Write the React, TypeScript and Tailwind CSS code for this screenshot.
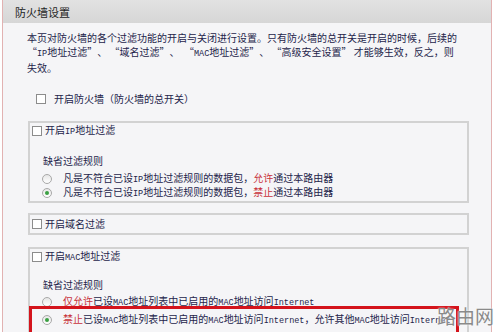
import React from 'react';

const cjk = "font-['Noto_Sans_CJK_SC',sans-serif]";

function L({ children }: { children: React.ReactNode }) {
  return <span className="font-['Liberation_Mono',monospace] text-[8.5px]">{children}</span>;
}

// full-width quote marks, like the SimSun ones in the original page
function Q({ close }: { close?: boolean }) {
  return (
    <span className={`inline-block w-[10px] ${close ? 'text-left' : 'text-right'}`}>{close ? '”' : '“'}</span>
  );
}

function Checkbox() {
  return <span className="inline-block w-[10px] h-[10px] border border-[#8c8c8c] bg-white shrink-0" />;
}

function Radio({ checked }: { checked?: boolean }) {
  return (
    <span className="w-[10px] h-[10px] rounded-full border border-[#a8a8a8] bg-gradient-to-b from-[#e6e6e6] to-white flex items-center justify-center shrink-0">
      {checked && <span className="w-[4px] h-[4px] rounded-full bg-[#3aa043]" />}
    </span>
  );
}

function CheckRow({ children }: { children: React.ReactNode }) {
  return (
    <div className="h-[16px] flex items-center pl-[2px] gap-[3px]">
      <Checkbox />
      <span>{children}</span>
    </div>
  );
}

function RadioRow({ checked, children, className = '' }: { checked?: boolean; children: React.ReactNode; className?: string }) {
  return (
    <div className={`h-[14px] flex items-center pl-[12px] gap-[11px] whitespace-nowrap ${className}`}>
      <Radio checked={checked} />
      <span>{children}</span>
    </div>
  );
}

const red = 'text-[#c8323a]';

export default function App() {
  return (
    <div className={`w-[500px] h-[332px] overflow-hidden bg-white relative ${cjk} text-[10px] leading-[14px] text-[#24244a]`}>
      <div className="ml-[2px] w-[490px] h-full border-x border-[#e2b2b2] bg-[#f5f5f7]">
        <div className="h-[23px] bg-gradient-to-b from-[#e2e2e2] to-[#d6d6d6] pl-[12px] flex items-center text-[11px] text-[#1f1f1f]">
          防火墙设置
        </div>

        <div className="pl-[24px] pt-[8px] whitespace-nowrap">
          本页对防火墙的各个过滤功能的开启与关闭进行设置。只有防火墙的总开关是开启的时候，后续的
          <br />
          <Q /><L>IP</L>地址过滤<Q close />、 <Q />域名过滤<Q close />、 &nbsp;<Q /><L>MAC</L>地址过滤<Q close />、 <Q />高级安全设置<Q close /> 才能够生效，反之，则
          <br />
          失效。
        </div>

        <div className="mt-[18px] ml-[33px] h-[12px] flex items-center gap-[8px]">
          <Checkbox />
          <span>开启防火墙（防火墙的总开关）</span>
        </div>

        <div className="ml-[25px] w-[441px] mt-[16px] border-2 border-[#d2d2d2] pb-[1px]">
          <CheckRow>
            开启<L>IP</L>地址过滤
          </CheckRow>
          <div className="mt-[15px] pl-[13px]">缺省过滤规则</div>
          <RadioRow className="mt-[4px]">
            凡是不符合已设<L>IP</L>地址过滤规则的数据包，<span className={red}>允许</span>通过本路由器
          </RadioRow>
          <RadioRow checked>
            凡是不符合已设<L>IP</L>地址过滤规则的数据包，<span className={red}>禁止</span>通过本路由器
          </RadioRow>
        </div>

        <div className="ml-[25px] w-[441px] mt-[10px] border-2 border-[#d2d2d2] py-[1px]">
          <CheckRow>开启域名过滤</CheckRow>
        </div>

        <div className="ml-[25px] w-[441px] mt-[12px] border-2 border-[#d2d2d2] h-[120px]">
          <CheckRow>
            开启<L>MAC</L>地址过滤
          </CheckRow>
          <div className="mt-[13px] pl-[13px]">缺省过滤规则</div>
          <RadioRow className="mt-[3px]">
            <span className={red}>仅允许</span>已设<L>MAC</L>地址列表中已启用的<L>MAC</L>地址访问<L>Internet</L>
          </RadioRow>
          <RadioRow checked className="mt-[4px]">
            <span className={red}>禁止</span>已设<L>MAC</L>地址列表中已启用的<L>MAC</L>地址访问<L>Internet</L>，允许其他<L>MAC</L>地址访问<L>Internet</L>
          </RadioRow>
        </div>
      </div>

      <div className="absolute left-[29px] top-[306px] w-[430px] h-[40px] border-[3px] border-[#d4141c]" />

      <div className="absolute left-[437px] top-[304px] text-[19px] leading-[24px] text-[#8a8a8a] [text-shadow:0_0_2px_#fff]">
        路由网
      </div>
    </div>
  );
}
